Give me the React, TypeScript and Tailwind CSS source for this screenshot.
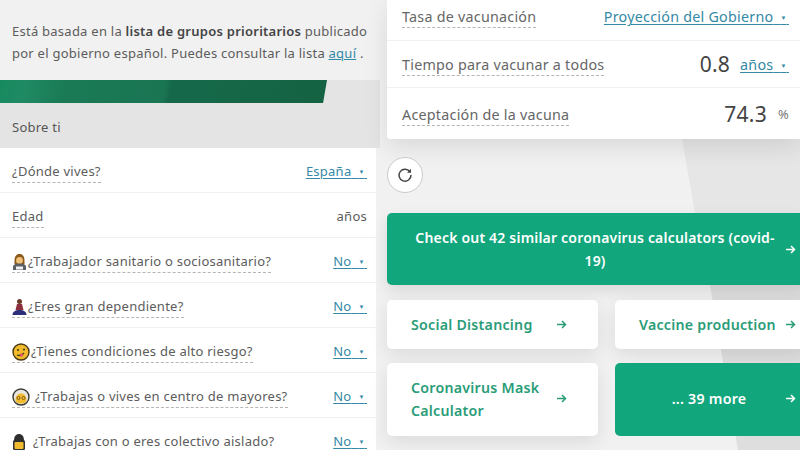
const font = { fontFamily: '"Noto Sans", "Open Sans", sans-serif' };

const Worker = () => (
  <svg width="15" height="18" viewBox="0 0 15 18">
    <path d="M2.5 8C2.5 3 4.5 1 7.5 1s5 2 5 7v3h-10z" fill="#8a5a1c" />
    <circle cx="7.5" cy="7.5" r="3.4" fill="#f3c27a" />
    <path d="M1 17v-3c0-2 2-3.500 6.500-3.500S14 12 14 14v3z" fill="#5d5f66" />
    <rect x="4" y="13.500" width="7" height="3" fill="#f1f1f1" />
  </svg>
);

const Dependent = () => (
  <svg width="15" height="18" viewBox="0 0 15 18">
    <circle cx="7.500" cy="3.500" r="2.500" fill="#6b3a2a" />
    <path d="M5 6h5l1.500 6h-8z" fill="#8c2f3c" />
    <path d="M0.500 17c0-3 2.500-5 7-5s7 2 7 5z" fill="#2e2f7a" />
  </svg>
);

const Sick = () => (
  <svg width="18" height="18" viewBox="0 0 18 18">
    <circle cx="9" cy="9" r="8" fill="#f2bb2e" stroke="#4a3a14" strokeWidth="1.400" />
    <circle cx="6" cy="7" r="1.100" fill="#4a3a14" />
    <circle cx="12" cy="6.500" r="1.100" fill="#4a3a14" />
    <path d="M5 12c2.500 1 5 .5 7-2" stroke="#4a3a14" strokeWidth="1.300" fill="none" />
    <circle cx="9.500" cy="12" r="1.700" fill="#d8586a" />
  </svg>
);

const Elder = () => (
  <svg width="18" height="18" viewBox="0 0 18 18">
    <circle cx="9" cy="9" r="8" fill="#e8e6df" stroke="#3b3b35" strokeWidth="1.400" />
    <path d="M3.500 12c0-4 2.500-6.500 5.500-6.500s5.500 2.500 5.500 6.500c0 2-2.500 3.500-5.500 3.500S3.500 14 3.500 12z" fill="#f2bb2e" />
    <circle cx="6.500" cy="10" r="1.500" fill="none" stroke="#6b4c16" strokeWidth=".8" />
    <circle cx="11.500" cy="10" r="1.500" fill="none" stroke="#6b4c16" strokeWidth=".8" />
  </svg>
);

const Isolated = () => (
  <svg width="14" height="18" viewBox="0 0 14 18">
    <path d="M2 8c0-5 2-7 5-7s5 2 5 7z" fill="#2f2f2f" />
    <rect x="1" y="7" width="12" height="10" rx="1.500" fill="#2f2f2f" />
    <rect x="2.500" y="9" width="9" height="7" rx="1" fill="#f2bb2e" />
  </svg>
);

const Arrow = ({ className }: { className: string }) => (
  <svg width="11" height="11" viewBox="0 0 11 11" fill="none" stroke="currentColor" strokeWidth="1.500" className={className}>
    <path d="M1 5.500h8.500M6 2l3.500 3.500L6 9" />
  </svg>
);

const Select = ({ children }: { children: string }) => (
  <span className="text-[#3489a6] underline underline-offset-2 decoration-1 whitespace-pre">
    {children}
    <span className="text-[8px]">
      {"   "}
      <span className="text-[6px] align-[2px]">▼</span>
      {" "}
    </span>
  </span>
);

const Label = ({ children }: { children: React.ReactNode }) => (
  <span className="flex items-center gap-px border-b border-dashed border-[#b5b5b5] leading-[21px]">{children}</span>
);

const questions = [
  { icon: <Worker />, text: "¿Trabajador sanitario o sociosanitario?", gap: "" },
  { icon: <Dependent />, text: "¿Eres gran dependiente?", gap: "" },
  { icon: <Sick />, text: "¿Tienes condiciones de alto riesgo?", gap: "" },
  { icon: <Elder />, text: "¿Trabajas o vives en centro de mayores?", gap: "pl-1" },
  { icon: <Isolated />, text: "¿Trabajas con o eres colectivo aislado?", gap: "pl-[6px]" },
];

export default function App() {
  return (
    <div style={font} className="w-[800px] h-[450px] overflow-hidden flex bg-[#f1f1f1] text-[13px] tracking-[0.25px] text-[#5c5c5c]">
      <div className="w-[380px] shrink-0">
        <div className="h-[80px] pt-[20px] pl-3 leading-[22px] whitespace-nowrap">
          <p>
            Está basada en la <b className="font-semibold text-[#444]">lista de grupos prioritarios</b> publicado
          </p>
          <p>
            por el gobierno español. Puedes consultar la lista <span className="text-[#3489a6] underline">aquí</span> .
          </p>
        </div>
        <div className="h-[24px] bg-[#e4e4e4]">
          <div className="h-[23px] w-[327px] bg-[linear-gradient(100deg,#178a60_0%,#1f8a63_8%,#1a7a56_20%,#1a7553_50%,#15694a_52%,#146343_100%)] [clip-path:polygon(0_0,100%_0,98.800%_100%,0_100%)]" />
        </div>
        <div className="h-[44px] bg-[#e4e4e4] pl-3 pt-[12px] leading-[22px] text-[#555]">Sobre ti</div>
        <div className="w-[376px] bg-white">
          <div className="h-[45px] flex items-center justify-between pl-3 pr-[9px] pt-[4px] border-b border-[#f1f1f1]">
            <Label>¿Dónde vives?</Label>
            <Select>España</Select>
          </div>
          <div className="h-[45px] flex items-center justify-between pl-3 pr-[9px] pt-[4px] border-b border-[#f1f1f1]">
            <Label>Edad</Label>
            <span>años</span>
          </div>
          {questions.map((q) => (
            <div key={q.text} className="h-[45px] flex items-center justify-between pl-3 pr-[9px] pt-[4px] border-b border-[#f1f1f1]">
              <Label>
                {q.icon}
                <span className={q.gap}>{q.text}</span>
              </Label>
              <Select>No</Select>
            </div>
          ))}
        </div>
      </div>

      <div className="relative flex-1 min-w-0 pl-[7px]">
        <div className="absolute left-[302px] top-[139px] w-[120px] h-[74px] bg-[#e6e6e6] [clip-path:polygon(0_0,100%_0,100%_100%,13px_100%)]" />
        <div className="absolute left-[330px] top-[285px] w-[90px] h-[165px] bg-[#dedede] [clip-path:polygon(0_0,100%_0,100%_100%,28px_100%)]" />
        <div className="relative">
          <div className="h-[139px] bg-white rounded-bl-[3px] shadow-[0_8px_24px_rgba(0,0,0,0.1)] pl-[15px] pr-[11px] text-[14.300px] text-[#666]">
            <div className="h-[40px] flex items-center justify-between pb-[6px]">
              <Label>Tasa de vacunación</Label>
              <Select>Proyección del Gobierno</Select>
            </div>
            <div className="h-[48px] flex items-center justify-between -mx-[15px] pl-[15px] pr-[11px] -mr-[11px] pt-[2px] border-y border-[#f1f1f1]">
              <Label>Tiempo para vacunar a todos</Label>
              <span className="flex items-center gap-[10px]">
                <span className="text-[21px] text-[#444]">0.8</span>
                <Select>años</Select>
              </span>
            </div>
            <div className="h-[51px] flex items-center justify-between pt-[2px]">
              <Label>Aceptación de la vacuna</Label>
              <span className="flex items-center gap-[11px]">
                <span className="text-[21px] text-[#444]">74.3</span>
                <span className="text-[13px] text-[#777]">%</span>
              </span>
            </div>
          </div>
          <div className="h-[74px] flex items-center pb-[2px]">
            <button className="w-[36px] h-[36px] rounded-full bg-white border border-[#c9c9c9] flex items-center justify-center text-[#444]">
              <svg width="16" height="16" viewBox="0 0 16 16" fill="none" stroke="currentColor" strokeWidth="1.500">
                <path d="M13.200 5.200A6 6 0 1 0 14 8" />
                <path d="M14 1.800v4h-4z" fill="currentColor" stroke="none" />
              </svg>
            </button>
          </div>
          <div className="h-[72px] w-[420px] rounded-[5px] bg-[#12a67c] text-white font-semibold text-[14px] tracking-[0.2px] leading-[23px] flex items-center pr-[11px] shadow-[0_6px_16px_rgba(0,0,0,0.1)]">
            <span className="flex-1 text-center pl-[22px] pr-[4px]">Check out 42 similar coronavirus calculators (covid-19)</span>
            <Arrow className="shrink-0" />
          </div>
          <div className="mt-[15px] grid grid-cols-[211px_1fr] gap-x-[17px] gap-y-[14px] w-[420px] font-semibold text-[14.200px] leading-[23px] text-[#2a9c78]">
            <div className="h-[49px] bg-white rounded-[5px] shadow-[0_6px_18px_rgba(0,0,0,0.09)] flex items-center justify-between pl-6 pr-[31px]">
              <span>Social Distancing</span>
              <Arrow className="shrink-0" />
            </div>
            <div className="h-[49px] bg-white rounded-[5px] shadow-[0_6px_18px_rgba(0,0,0,0.09)] flex items-center justify-between pl-6 pr-[11px] whitespace-nowrap">
              <span>Vaccine production</span>
              <Arrow className="shrink-0" />
            </div>
            <div className="h-[73px] bg-white rounded-[5px] shadow-[0_6px_18px_rgba(0,0,0,0.09)] flex items-center justify-between pl-6 pr-[31px] pb-[2px]">
              <span className="w-[140px]">Coronavirus Mask Calculator</span>
              <Arrow className="shrink-0" />
            </div>
            <div className="h-[73px] bg-[#12a67c] rounded-[5px] text-white flex items-center pr-[11px] pb-[2px]">
              <span className="flex-1 text-center pl-[18px]">... 39 more</span>
              <Arrow className="shrink-0" />
            </div>
          </div>
        </div>
      </div>
    </div>
  );
}
